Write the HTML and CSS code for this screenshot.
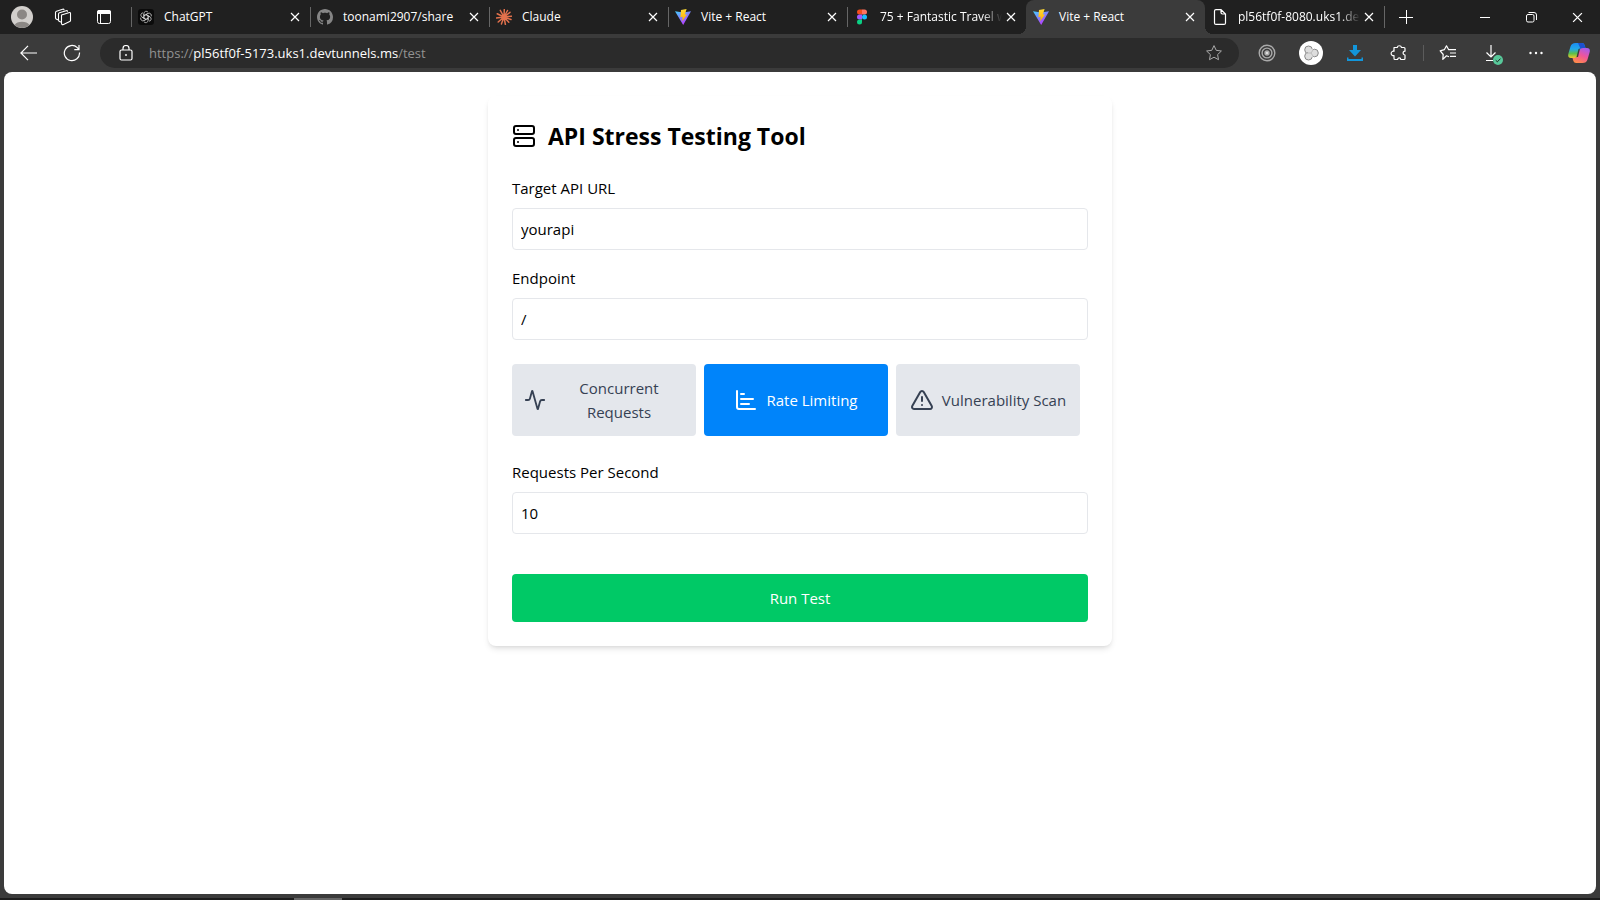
FILE: index.html
```html
<!DOCTYPE html>
<html lang="en">
<head>
<meta charset="utf-8">
<title>Vite + React</title>
<link rel="stylesheet" href="styles.css">
</head>
<body>
<svg class="defs" aria-hidden="true">
  <defs>
    <linearGradient id="viteBlue" x1="0" y1="0" x2="0.6" y2="1"><stop offset="0" stop-color="#41d1ff"/><stop offset="1" stop-color="#bd34fe"/></linearGradient>
    <linearGradient id="viteGold" x1="0" y1="0" x2="0" y2="1"><stop offset="0" stop-color="#ffdd35"/><stop offset="1" stop-color="#ffa800"/></linearGradient>
    <linearGradient id="copA" x1="0" y1="0" x2="0" y2="1"><stop offset="0" stop-color="#1b8df0"/><stop offset=".4" stop-color="#22a8e8"/><stop offset=".7" stop-color="#5cc04a"/><stop offset="1" stop-color="#f4c62b"/></linearGradient>
    <linearGradient id="copB" x1=".8" y1="0" x2=".3" y2="1"><stop offset="0" stop-color="#a45cf0"/><stop offset=".5" stop-color="#f0559a"/><stop offset="1" stop-color="#ff8a4a"/></linearGradient>
    <symbol id="close" viewBox="0 0 10 10"><path d="M1 1l8 8M9 1l-8 8" fill="none" stroke="currentColor" stroke-width="1.2"/></symbol>
    <symbol id="vite" viewBox="0 0 16 16"><path d="M0 2.2 L8.2 16 L16 2.2 L8.2 3.6Z" fill="url(#viteBlue)"/><path d="M11.6 0 L6 1.1 L5.4 8.2 L7.6 7.8 L7.2 12.2 L12 5.4 L9.9 5.6Z" fill="url(#viteGold)"/></symbol>
    <symbol id="star" viewBox="0 0 18 18"><path d="M9 1.6l2.2 4.700 5.200.7-3.800 3.600.9 5.100L9 13.200l-4.500 2.500.9-5.100L1.600 7l5.200-.7z" fill="none" stroke="currentColor" stroke-linejoin="round"/></symbol>
  </defs>
</svg>

<header class="browser">
  <div class="tabstrip">
    <div class="leading">
      <button class="cell" aria-label="Profile"><svg width="22" height="22" viewBox="0 0 22 22"><circle cx="11" cy="11" r="11" fill="#d2cfcc"/><circle cx="11" cy="8.5" r="5" fill="#8b8784"/><path d="M3.5 19a8.5 6 0 0 1 15 0A11 11 0 0 1 3.5 19z" fill="#8b8784"/></svg></button>
      <button class="cell" aria-label="Workspaces"><svg width="18" height="18" viewBox="0 0 18 18" fill="none" stroke="currentColor" stroke-width="1.1" stroke-linejoin="round"><path d="M7.500 7 15.500 4.500q1-.2 1 .8v7.200q0 .8-.8 1.100l-6.200 2.800q-2 .7-2-1.200zM7.500 14.300l-2-.8q-1-.4-1-1.500V6q0-1 1-1.300l6.700-2q1.300-.3 1.300 1M4.500 12l-2-.8Q1.500 10.800 1.500 9.800V4.500q0-1 1-1.300L8.700 1.200Q10 .9 10 2.200"/></svg></button>
      <button class="cell" aria-label="Tab actions"><svg width="16" height="16" viewBox="0 0 16 16"><rect x="1.500" y="1.500" width="13" height="13" rx="2" fill="none" stroke="#fff"/><path d="M1 5V3q0-2 2-2h10q2 0 2 2v2z" fill="#fff"/><path d="M4.500 5v9" stroke="#fff"/></svg></button>
    </div>
    <div class="tabs">
      <div class="tab"><svg class="fav" viewBox="0 0 16 16"><rect width="16" height="16" rx="3" fill="#0b0b0b"/><g fill="none" stroke="#ddd" stroke-width=".7"><path id="knot" d="M5.900 9.200V4.600a2.300 2.300 0 0 1 4.200-1.300M5.900 6.800 9.700 4.600"/><use href="#knot" transform="rotate(60 8 8)"/><use href="#knot" transform="rotate(120 8 8)"/><use href="#knot" transform="rotate(180 8 8)"/><use href="#knot" transform="rotate(240 8 8)"/><use href="#knot" transform="rotate(300 8 8)"/></g></svg><span class="name">ChatGPT</span><button class="x" aria-label="Close tab"><svg><use href="#close"/></svg></button></div>
      <div class="tab"><svg class="fav" viewBox="0 0 16 16"><path fill="#858585" d="M8 0C3.580 0 0 3.580 0 8c0 3.540 2.290 6.530 5.470 7.590.4.070.55-.17.55-.38 0-.19-.01-.82-.01-1.490-2.010.37-2.530-.49-2.690-.94-.09-.23-.48-.94-.82-1.130-.28-.15-.68-.52-.01-.53.63-.01 1.080.58 1.230.82.72 1.210 1.870.87 2.330.66.070-.52.28-.87.51-1.070-1.780-.2-3.640-.89-3.640-3.950 0-.87.31-1.590.82-2.150-.08-.2-.36-1.020.08-2.120 0 0 .67-.21 2.200.82.64-.18 1.320-.27 2-.27s1.360.09 2 .27c1.530-1.040 2.200-.82 2.200-.82.44 1.100.16 1.920.08 2.120.51.56.82 1.270.82 2.150 0 3.070-1.870 3.750-3.650 3.950.29.25.54.73.54 1.480 0 1.070-.01 1.930-.01 2.200 0 .21.15.46.55.38A8.010 8.010 0 0 0 16 8c0-4.420-3.580-8-8-8z"/></svg><span class="name">toonami2907/share</span><button class="x" aria-label="Close tab"><svg><use href="#close"/></svg></button></div>
      <div class="tab"><svg class="fav" viewBox="0 0 16 16"><path d="M8 8 8.300.5M8 8l3.500-6.500M8 8l6-4.700M8 8l7.600-.8M8 8l7 2.500M8 8l4.800 5.300M8 8l1.400 7.500M8 8l-2.600 7M8 8l-5.800 5M8 8l-7.700 1M8 8 1.200 4.800M8 8 4.300 1.400" stroke="#e2714c" stroke-width="1.500" stroke-linecap="round"/></svg><span class="name">Claude</span><button class="x" aria-label="Close tab"><svg><use href="#close"/></svg></button></div>
      <div class="tab"><svg class="fav"><use href="#vite"/></svg><span class="name">Vite + React</span><button class="x" aria-label="Close tab"><svg><use href="#close"/></svg></button></div>
      <div class="tab"><svg class="fav" viewBox="0 0 16 16"><path d="M8 .5H5.500a2.500 2.500 0 0 0 0 5H8z" fill="#f24e1e"/><path d="M8 .5h2.500a2.500 2.500 0 0 1 0 5H8z" fill="#ff7262"/><path d="M8 5.500H5.500a2.500 2.500 0 0 0 0 5H8z" fill="#a259ff"/><circle cx="10.500" cy="8" r="2.500" fill="#1abcfe"/><path d="M8 10.500H5.500A2.500 2.500 0 1 0 8 13z" fill="#0acf83"/></svg><span class="name fade">75 + Fantastic Travel w</span><button class="x" aria-label="Close tab"><svg><use href="#close"/></svg></button></div>
      <div class="tab active"><svg class="fav"><use href="#vite"/></svg><span class="name">Vite + React</span><button class="x" aria-label="Close tab"><svg><use href="#close"/></svg></button></div>
      <div class="tab last"><svg class="fav" viewBox="0 0 16 16" fill="none" stroke="#fff" stroke-width="1.200"><path d="M4 .6h5L13.500 5v8.900q0 1.500-1.500 1.500H4q-1.500 0-1.500-1.500V2.100Q2.500.6 4 .6zM9 .6v3q0 1.400 1.400 1.400h3.100"/></svg><span class="name fade">pl56tf0f-8080.uks1.de</span><button class="x" aria-label="Close tab"><svg><use href="#close"/></svg></button></div>
    </div>
    <button class="newtab" aria-label="New tab"><svg width="14" height="14" viewBox="0 0 14 14"><path d="M7.500 0v14M0 7.500h14" stroke="currentColor"/></svg></button>
    <div class="window">
      <button aria-label="Minimize"><svg width="10" height="10" viewBox="0 0 10 10"><path d="M0 5.500h10" stroke="currentColor"/></svg></button>
      <button aria-label="Restore"><svg width="11" height="11" viewBox="0 0 11 11" fill="none" stroke="currentColor"><rect x=".5" y="2.500" width="7.500" height="7.500" rx="1.500"/><path d="M2.500.5H8q2.500 0 2.500 2.500v5"/></svg></button>
      <button aria-label="Close window"><svg width="11" height="11"><use href="#close"/></svg></button>
    </div>
  </div>

  <div class="toolbar">
    <button class="nav" aria-label="Back"><svg width="17" height="16" viewBox="0 0 17 16" fill="none" stroke="currentColor" stroke-width="1.200"><path d="M8 .8.900 8 8 15.200M1 8h16"/></svg></button>
    <button class="nav" aria-label="Refresh"><svg width="18" height="18" viewBox="0 0 18 18" fill="none" stroke="currentColor" stroke-width="1.200"><path d="M16.500 8.500A7.600 7.600 0 1 1 14.300 3.700L16 5.500M16 1v4.700h-4.700"/></svg></button>
    <div class="address">
      <button class="lock" aria-label="Site information"><svg width="14" height="16" viewBox="0 0 14 16" fill="none" stroke="currentColor" stroke-width="1.200"><rect x="1" y="5" width="12" height="10" rx="1.500"/><path d="M4 5V3.500a3 3 0 0 1 6 0V5"/><circle cx="7" cy="10" r=".7" fill="#fff" stroke-width=".6"/></svg></button>
      <div class="url" role="textbox" aria-label="Address" contenteditable="true" spellcheck="false">https://<span class="host">pl56tf0f-5173.uks1.devtunnels.ms</span>/test</div>
      <button class="favorite" aria-label="Add to favorites"><svg width="18" height="18"><use href="#star"/></svg></button>
    </div>
    <div class="actions">
      <button aria-label="Recorder"><svg width="18" height="18" viewBox="0 0 18 18" fill="none" stroke="#aaa" stroke-width="1.400"><circle cx="9" cy="9" r="7.800"/><circle cx="9" cy="9" r="4.900"/><circle cx="9" cy="9" r="2" fill="#ddd"/></svg></button>
      <button aria-label="Extension"><svg width="24" height="24" viewBox="0 0 24 24"><circle cx="12" cy="12" r="12" fill="#fff"/><g fill="#ddd" stroke="#888"><circle cx="9.500" cy="8.800" r="3.800"/><circle cx="9.500" cy="15.200" r="3.800"/><circle cx="15.500" cy="12" r="3.800"/></g><path d="M9 6 16 9.500v5L9 18z" fill="#ddd"/><path d="M6.500 12H12M12 12l2-3M12 12l2 3" stroke="#bbb" fill="none"/></svg></button>
      <button aria-label="Downloader"><svg width="16" height="16" viewBox="0 0 16 16" fill="#1296db"><path d="M6 0h4v5h4l-6 6.500L2 5h4z"/><path d="M0 12.500h1.500V14h13v-1.500H16V16H0z"/></svg></button>
      <button aria-label="Extensions"><svg width="18" height="18" viewBox="0 0 18 18" fill="none" stroke="currentColor" stroke-width="1.200" stroke-linejoin="round"><path d="M4 3.500h3.200a2.200 2.200 0 0 1 4.300 0H14q1 0 1 1v2.700a1.600 1.600 0 0 0 0 3.800v3.500q0 1-1 1h-3.200a1.600 1.600 0 0 0-3.200 0H5q-1 0-1-1v-3a2.200 2.200 0 1 1 0-4.200z"/></svg></button>
      <span class="rule"></span>
      <button aria-label="Favorites"><svg width="18" height="18" viewBox="0 0 18 18" fill="none" stroke="currentColor" stroke-width="1.200" stroke-linejoin="round"><path d="M10 12.800 7.500 11.800 3.800 15.400 4.200 10.500 1.200 6.800 5.300 5.700 7.500 1.800 9.700 5.700H17M11 9h6M11 12.300h6"/></svg></button>
      <button class="badged" aria-label="Downloads"><svg width="16" height="18" viewBox="0 0 16 18" fill="none" stroke="currentColor" stroke-width="1.200"><path d="M7 1v12M2.500 8.500 7 13l4.500-4.500M2 16.500h7"/></svg><svg class="badge" viewBox="0 0 10 10"><circle cx="5" cy="5" r="5" fill="#58c89a"/><path d="M2.700 5.200 4.400 6.800 7.500 3.600" fill="none" stroke="#222"/></svg></button>
      <button aria-label="Settings and more"><svg width="14" height="4" viewBox="0 0 14 4" fill="currentColor"><circle cx="1.500" cy="2" r="1.200"/><circle cx="7" cy="2" r="1.200"/><circle cx="12.500" cy="2" r="1.200"/></svg></button>
      <button class="copilot" aria-label="Copilot"><svg width="22" height="20" viewBox="0 0 22 20"><path d="M7.500 0H14q2 0 2.600 2l.9 3h-2.800q-1.600 0-2.200 2L11 11.500q-.8 3.500-4 3.500H3Q-.500 15 .3 11L2.500 3.500Q3.500 0 7.500 0z" fill="url(#copA)"/><path d="M10 0h4q2 0 2.600 2l.9 3h-2.800q-1.200 0-1.900 1.400z" fill="#1c50d0"/><path d="M14.500 20H8q-2 0-2.600-2L4.500 15H7q1.900 0 2.500-2L11 8.500Q12 5 15 5h4q3.500 0 2.700 4l-2.200 7.500Q18.500 20 14.500 20z" fill="url(#copB)"/><path d="M12 5.500 10 14h-1.500l2-8z" fill="#3b3b3b"/></svg></button>
    </div>
  </div>
</header>

<main class="page">
  <form class="card" onsubmit="return false">
    <h1><svg class="icon" viewBox="0 0 24 24"><rect x="2" y="2" width="20" height="8" rx="2"/><rect x="2" y="14" width="20" height="8" rx="2"/><path d="M6 6h.01M6 18h.01"/></svg>API Stress Testing Tool</h1>
    <div class="field"><label for="target">Target API URL</label><input id="target" type="text" value="yourapi"></div>
    <div class="field"><label for="endpoint">Endpoint</label><input id="endpoint" type="text" value="/"></div>
    <div class="modes">
      <button type="button" class="wrap"><svg class="icon" viewBox="0 0 24 24"><path d="M22 12h-2.480a2 2 0 0 0-1.930 1.460l-2.350 8.360a.25.25 0 0 1-.48 0L9.240 2.180a.25.25 0 0 0-.48 0l-2.350 8.360A2 2 0 0 1 4.490 12H2"/></svg><span>Concurrent Requests</span></button>
      <button type="button" class="selected"><svg class="icon" viewBox="0 0 24 24"><path d="M3 3v16a2 2 0 0 0 2 2h16M7 16h8M7 11h12M7 6h3"/></svg><span>Rate Limiting</span></button>
      <button type="button"><svg class="icon" viewBox="0 0 24 24"><path d="m21.730 18-8-14a2 2 0 0 0-3.480 0l-8 14A2 2 0 0 0 4 21h16a2 2 0 0 0 1.730-3M12 9v4M12 17h.01"/></svg><span>Vulnerability Scan</span></button>
    </div>
    <div class="field"><label for="rps">Requests Per Second</label><input id="rps" type="number" value="10"></div>
    <button type="submit" class="run">Run Test</button>
  </form>
</main>
<footer class="taskbar"><span class="task"></span></footer>
</body>
</html>
```

FILE: styles.css
```css
*, *::before, *::after { box-sizing: border-box; }

body {
  margin: 0;
  min-height: 100vh;
  display: flex;
  flex-direction: column;
  background: #3b3b3b;
  color: #000;
  font: 15px/24px "Open Sans", "Noto Sans", sans-serif;
}

button {
  padding: 0;
  border: 0;
  background: none;
  color: inherit;
  font: inherit;
}

svg { display: block; flex: none; }
.defs { position: absolute; width: 0; height: 0; }

/* Browser frame */
.browser { color: #fff; }

.tabstrip {
  display: flex;
  height: 34px;
  background: #202020;
  font-size: 12px;
  line-height: 16px;
}

.leading {
  display: flex;
  gap: 1px;
  padding: 0 7px 0 2px;
}

.cell {
  display: grid;
  place-items: center;
  width: 40px;
}

.tabs {
  display: flex;
  flex: 0 1 1254px;
  min-width: 0;
}

.tab {
  position: relative;
  display: flex;
  flex: 1 1 0;
  align-items: center;
  min-width: 0;
  padding: 0 10px 0 7px;
}

.tab::before {
  content: "";
  position: absolute;
  left: 0;
  top: 7px;
  width: 1px;
  height: 20px;
  background: #666;
}

.tab.last { border-right: 1px solid; border-image: linear-gradient(#202020 7px, #666 7px 27px, #202020 27px) 1; }

.tab.active {
  border-radius: 8px 8px 0 0;
  background: #3b3b3b;
}

.tab.active::before,
.tab.active::after {
  content: "";
  position: absolute;
  top: auto;
  bottom: 0;
  left: -8px;
  width: 8px;
  height: 8px;
  background: radial-gradient(circle at 0 0, #202020 8px, #3b3b3b 8px);
}

.tab.active::after {
  left: 100%;
  z-index: 1;
  background: radial-gradient(circle at 100% 0, #202020 8px, #3b3b3b 8px);
}

.tab.active + .tab::before { display: none; }

.fav {
  width: 16px;
  height: 16px;
}

.name {
  flex: 1;
  min-width: 0;
  margin-left: 10px;
  white-space: nowrap;
}

.fade { mask-image: linear-gradient(to right, #000 calc(100% - 20px), transparent); }

.x {
  display: grid;
  place-items: center;
  width: 10px;
  height: 16px;
  margin-left: 4px;
}

.x svg { width: 10px; height: 10px; }

.newtab { width: 42px; display: grid; place-items: center; }

.window {
  display: flex;
  margin-left: auto;
}

.window button {
  display: grid;
  place-items: center;
  width: 46px;
}

.toolbar {
  display: flex;
  align-items: center;
  height: 38px;
  padding-left: 6px;
}

.nav {
  display: grid;
  place-items: center;
  width: 44px;
  height: 30px;
}

.address {
  display: flex;
  flex: 1;
  align-items: center;
  height: 30px;
  min-width: 0;
  margin: 0 6px;
  padding: 0 16px 0 19px;
  border-radius: 15px;
  background: #2b2b2b;
}

.url {
  flex: 1;
  margin-left: 16px;
  color: #929292;
  font-size: 13px;
  line-height: 20px;
  white-space: nowrap;
  overflow: hidden;
}

.host { color: #fff; }
.favorite { color: #aaa; }

.actions {
  display: flex;
  align-items: center;
}

.actions button {
  position: relative;
  display: grid;
  place-items: center;
  width: 44px;
  height: 30px;
}

.actions .copilot { width: 42px; }

.rule {
  width: 1px;
  height: 16px;
  margin: 0 2px;
  background: #5c5c5c;
}

.badge {
  position: absolute;
  right: 11px;
  bottom: 3px;
  width: 10px;
  height: 10px;
}

/* Page */
.page {
  flex: 1;
  margin: 0 4px;
  padding: 24px;
  border-radius: 8px;
  background: #fff;
}

.card {
  max-width: 624px;
  margin: 0 auto;
  padding: 24px;
  border-radius: 8px;
  box-shadow: 0 4px 6px -1px rgb(0 0 0 / 0.1), 0 2px 4px -2px rgb(0 0 0 / 0.1);
}

h1 {
  display: flex;
  align-items: center;
  gap: 12px;
  margin: 0 0 24px;
  font-size: 23px;
  line-height: 32px;
  font-weight: 700;
}

.icon {
  width: 24px;
  height: 24px;
  fill: none;
  stroke: currentColor;
  stroke-width: 2;
  stroke-linecap: round;
  stroke-linejoin: round;
}

.field { margin-bottom: 16px; }

.field label {
  display: block;
  margin-bottom: 8px;
}

.field input {
  display: block;
  width: 100%;
  height: 42px;
  padding: 8px;
  border: 1px solid #e5e7eb;
  border-radius: 4px;
  background: #fff;
  color: inherit;
  font: inherit;
}

.modes {
  display: grid;
  grid-template-columns: repeat(3, 1fr);
  gap: 8px;
  margin: 24px 8px 24px 0;
}

.modes button {
  display: flex;
  align-items: center;
  justify-content: center;
  gap: 8px;
  min-height: 72px;
  padding: 12px;
  border-radius: 4px;
  background: #e4e7ec;
  color: #364153;
}

.modes .selected {
  background: #0084fa;
  color: #fff;
}

.wrap .icon { width: 22px; }
.wrap span { flex: 1; }

.run {
  display: block;
  width: 100%;
  height: 48px;
  margin-top: 40px;
  border-radius: 4px;
  background: #00c966;
  color: #fff;
}

.taskbar {
  height: 6px;
  padding: 4px 0 0 294px;
  background: linear-gradient(#3b3b3b 4px, #1c1c1c 4px);
}

.task {
  display: block;
  width: 48px;
  height: 2px;
  background: #666;
}
```
